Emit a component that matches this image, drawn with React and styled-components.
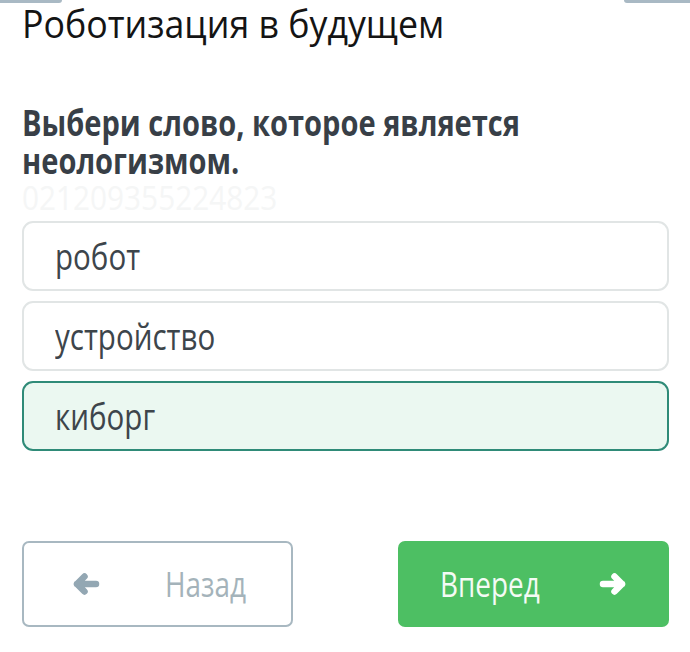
import React from 'react';
import styled, { createGlobalStyle } from 'styled-components';

const GlobalStyle = createGlobalStyle`
  html, body {
    margin: 0;
    padding: 0;
    background: #fff;
  }
  body {
    font-family: "Open Sans", "Noto Sans", sans-serif;
  }
`;

const options = [
  { id: 1, text: 'робот' },
  { id: 2, text: 'устройство' },
  { id: 3, text: 'киборг', selected: true },
];

const Arrow = ({ right }) => (
  <ArrowSvg viewBox="0 0 28 24" $right={right}>
    <path
      d="M24 12 H5 M12.5 4.5 L5 12 L12.5 19.5"
      fill="none"
      stroke="currentColor"
      strokeWidth="6.5"
      strokeLinecap="round"
      strokeLinejoin="round"
    />
  </ArrowSvg>
);

const App = () => {
  return (
    <Page>
      <GlobalStyle />
      <TopBar>
        <Tab />
        <Tab $right />
      </TopBar>
      <Title>Роботизация в будущем</Title>
      <Question>Выбери слово, которое является неологизмом.</Question>
      <QuestionId>021209355224823</QuestionId>
      <OptionList>
        {options.map(o => (
          <Option key={o.id} $selected={o.selected}>
            <Label>{o.text}</Label>
          </Option>
        ))}
      </OptionList>
      <Footer>
        <BackButton>
          <Arrow />
          <Label>Назад</Label>
        </BackButton>
        <NextButton>
          <Label>Вперед</Label>
          <Arrow right />
        </NextButton>
      </Footer>
    </Page>
  );
};

export default App;

const Page = styled.div`
  width: 690px;
  height: 652px;
  overflow: hidden;
  display: flex;
  flex-direction: column;
  padding: 0 21px 0 22px;
  box-sizing: border-box;
`;

const TopBar = styled.div`
  display: flex;
  justify-content: space-between;
  margin: 0 -21px 0 -22px;
  height: 3px;
  flex-shrink: 0;
`;

const Tab = styled.div`
  width: ${p => (p.$right ? '66px' : '62px')};
  height: 3px;
  background: #a9b9c4;
  border-radius: ${p => (p.$right ? '0 0 0 6px' : '0 0 6px 0')};
`;

const Title = styled.h1`
  margin: 0;
  font-size: 38px;
  font-weight: 400;
  line-height: 40px;
  color: #141414;
  white-space: nowrap;
  transform: scaleX(0.94);
  transform-origin: left center;
`;

const Question = styled.h2`
  margin: 61px 0 0;
  width: 620px;
  font-size: 35px;
  font-weight: 700;
  line-height: 38px;
  color: #383f47;
  transform: scaleX(0.83);
  transform-origin: left top;
`;

const QuestionId = styled.div`
  font-size: 32px;
  line-height: 36px;
  color: #f5f6f6;
  transform: scaleX(0.93);
  transform-origin: left center;
`;

const OptionList = styled.div`
  display: flex;
  flex-direction: column;
  gap: 10px;
  margin-top: 5px;
`;

const Option = styled.div`
  height: 70px;
  display: flex;
  align-items: center;
  padding-left: 31px;
  box-sizing: border-box;
  border: 2px solid ${p => (p.$selected ? '#2f8b78' : '#e1e5e5')};
  background: ${p => (p.$selected ? '#ebf8f1' : '#fff')};
  border-radius: 11px;
  font-size: 36px;
  color: #3d454b;
`;

const Label = styled.span`
  display: inline-block;
  transform: scaleX(0.82);
  transform-origin: left center;
`;

const ArrowSvg = styled.svg`
  width: 28px;
  height: 24px;
  flex-shrink: 0;
  transform: ${p => (p.$right ? 'scaleX(-1)' : 'none')};
`;

const Footer = styled.div`
  display: flex;
  justify-content: space-between;
  margin-top: 90px;
`;

const ButtonBase = styled.div`
  width: 271px;
  height: 86px;
  box-sizing: border-box;
  border-radius: 7px;
  display: flex;
  align-items: center;
  font-size: 34px;
`;

const BackButton = styled(ButtonBase)`
  border: 2px solid #a8b8c1;
  color: #a4b3ba;
  padding-left: 48px;
  gap: 65px;

  svg {
    color: #93a7b3;
  }
`;

const NextButton = styled(ButtonBase)`
  background: #4dbf63;
  color: #f4fbf5;
  padding-left: 42px;
  gap: 37px;

  svg {
    color: #fff;
  }
`;
